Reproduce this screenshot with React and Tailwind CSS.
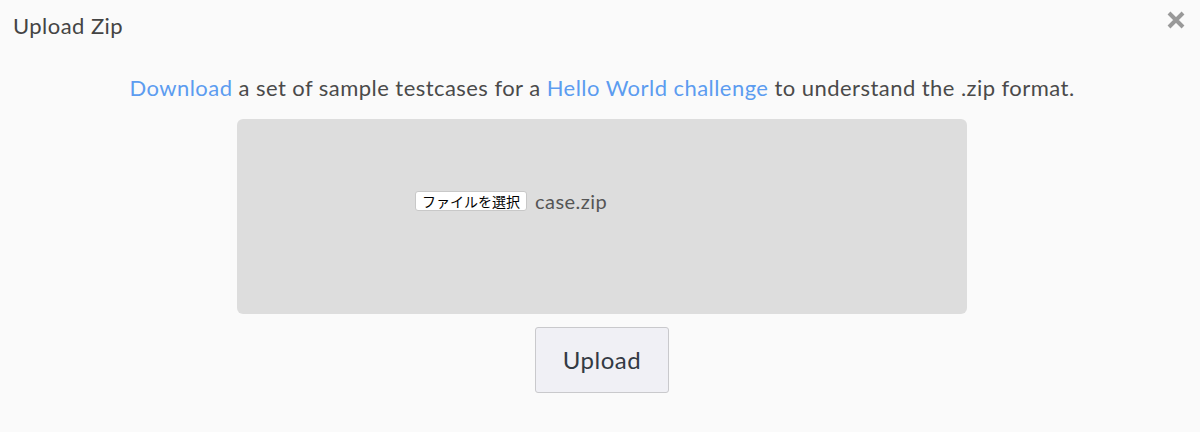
import React from "react";

const App = () => {
    return (
        <div className="w-[1200px] h-[432px] bg-[#fafafa] text-[#4a4a4a] font-['Lato','Noto_Sans_CJK_JP',sans-serif] tracking-[0.45px] relative overflow-hidden">
            <div className="flex items-center justify-between pl-[13px] pr-[14px] h-[54px]">
                <h2 className="text-[22px] leading-none text-[#444] -mt-[2px]">Upload Zip</h2>
                <button className="text-[#999] -mt-[14px]" aria-label="close">
                    <svg width="20" height="20" viewBox="0 0 20 20">
                        <path d="M3 3 L17 17 M17 3 L3 17" stroke="#999" strokeWidth="4" strokeLinecap="butt" />
                    </svg>
                </button>
            </div>
            <p className="text-center text-[22px] leading-[28px] mt-[20px] pl-[4px]">
                <a className="text-[#5c9cf0]" href="#">Download</a> a set of sample testcases for a{" "}
                <a className="text-[#5c9cf0]" href="#">Hello World challenge</a> to understand the .zip format.
            </p>
            <div className="flex flex-col items-center mt-[17px] pl-[4px]">
                <div className="w-[730px] h-[195px] bg-[#dddddd] rounded-[6px] flex items-center justify-center">
                    <div className="w-[374px] flex items-center -translate-y-[16px]">
                        <span className="bg-white border border-[#c8c8c8] rounded-[3px] px-[6px] h-[20px] flex items-center text-[14px] text-black tracking-normal font-['Noto_Sans_CJK_JP',sans-serif] leading-none">
                            ファイルを選択
                        </span>
                        <span className="ml-[8px] text-[20px] text-[#555]">case.zip</span>
                    </div>
                </div>
                <button className="mt-[13px] w-[134px] h-[66px] bg-[#f0f0f5] border border-[#c9c9cc] rounded-[3px] text-[24px] tracking-[0.5px] text-[#333a44]">
                    Upload
                </button>
            </div>
        </div>
    );
};

export default App;
